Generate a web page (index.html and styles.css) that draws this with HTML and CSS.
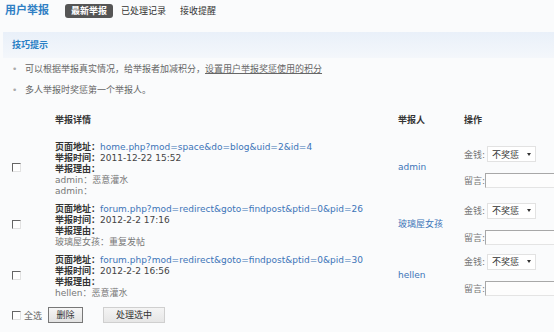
FILE: index.html
```html
<!DOCTYPE html>
<html lang="zh-CN">
<head>
<meta charset="utf-8">
<title>用户举报</title>
<link rel="stylesheet" href="styles.css">
</head>
<body>
<div class="page">
  <div class="topbar">
    <h1 class="title">用户举报</h1>
    <nav class="tabs">
      <a class="tab active">最新举报</a>
      <a class="tab">已处理记录</a>
      <a class="tab">接收提醒</a>
    </nav>
  </div>

  <div class="tipbar">技巧提示</div>
  <ul class="tips">
    <li>可以根据举报真实情况，给举报者加减积分，<a class="tiplink">设置用户举报奖惩使用的积分</a></li>
    <li>多人举报时奖惩第一个举报人。</li>
  </ul>

  <table class="reports">
    <colgroup>
      <col class="col-check">
      <col class="col-detail">
      <col class="col-user">
      <col class="col-op">
    </colgroup>
    <thead>
      <tr><th></th><th>举报详情</th><th>举报人</th><th>操作</th></tr>
    </thead>
    <tbody>
      <tr>
        <td class="c-check"><span class="cb"></span></td>
        <td>
          <div class="detail">
            <div><b>页面地址：</b><a class="link">home.php?mod=space&amp;do=blog&amp;uid=2&amp;id=4</a></div>
            <div><b>举报时间：</b><span class="val">2011-12-22 15:52</span></div>
            <div><b>举报理由：</b></div>
            <div class="reason">admin：恶意灌水</div>
            <div class="reason">admin：</div>
          </div>
        </td>
        <td><a class="link">admin</a></td>
        <td>
          <div class="op">
            <div class="op-line"><span class="op-label">金钱:</span><span class="sel">不奖惩<i class="arrow"></i></span></div>
            <div class="op-line"><span class="op-label">留言:</span><span class="inp"></span></div>
          </div>
        </td>
      </tr>
      <tr>
        <td class="c-check"><span class="cb"></span></td>
        <td>
          <div class="detail">
            <div><b>页面地址：</b><a class="link">forum.php?mod=redirect&amp;goto=findpost&amp;ptid=0&amp;pid=26</a></div>
            <div><b>举报时间：</b><span class="val">2012-2-2 17:16</span></div>
            <div><b>举报理由：</b></div>
            <div class="reason">玻璃屋女孩：重复发帖</div>
          </div>
        </td>
        <td><a class="link">玻璃屋女孩</a></td>
        <td>
          <div class="op">
            <div class="op-line"><span class="op-label">金钱:</span><span class="sel">不奖惩<i class="arrow"></i></span></div>
            <div class="op-line"><span class="op-label">留言:</span><span class="inp"></span></div>
          </div>
        </td>
      </tr>
      <tr>
        <td class="c-check"><span class="cb"></span></td>
        <td>
          <div class="detail">
            <div><b>页面地址：</b><a class="link">forum.php?mod=redirect&amp;goto=findpost&amp;ptid=0&amp;pid=30</a></div>
            <div><b>举报时间：</b><span class="val">2012-2-2 16:56</span></div>
            <div><b>举报理由：</b></div>
            <div class="reason">hellen：恶意灌水</div>
          </div>
        </td>
        <td><a class="link">hellen</a></td>
        <td>
          <div class="op">
            <div class="op-line"><span class="op-label">金钱:</span><span class="sel">不奖惩<i class="arrow"></i></span></div>
            <div class="op-line"><span class="op-label">留言:</span><span class="inp"></span></div>
          </div>
        </td>
      </tr>
    </tbody>
  </table>

  <div class="footer">
    <span class="cb"></span>
    <span class="all">全选</span>
    <button class="btn btn-del">删除</button>
    <button class="btn btn-do">处理选中</button>
  </div>
</div>
</body>
</html>
```

FILE: styles.css
```css
html, body {
  margin: 0;
  padding: 0;
  overflow: hidden;
  background: #fafbfc;
}

body {
  font-family: "DejaVu Sans", "Noto Sans CJK SC", sans-serif;
  font-size: 9px;
  color: #333;
}

.page {
  width: 554px;
}

/* top bar */
.topbar {
  display: flex;
  align-items: center;
  height: 15px;
  padding: 3px 0 0 5px;
}

.title {
  margin: 0;
  font-size: 11px;
  font-weight: bold;
  color: #2f7fc4;
  line-height: 15px;
}

.tabs {
  display: flex;
  gap: 2px;
  margin-left: 16px;
}

.tab {
  display: block;
  padding: 0 6px;
  line-height: 14px;
  height: 14px;
  color: #333;
  border-radius: 3px;
}

.tab.active {
  background: #555;
  color: #fff;
  font-weight: bold;
}

/* tip bar */
.tipbar {
  margin: 14px 0 0 3px;
  height: 26px;
  line-height: 26px;
  padding-left: 9px;
  font-weight: bold;
  color: #2a80c5;
  background: linear-gradient(#e9f0f9, #f4f7fb);
}

.tips {
  list-style: none;
  margin: 1px 0 0;
  padding: 0 0 0 25px;
  color: #666;
}

.tips li {
  line-height: 21px;
}

.tips li::before {
  content: "•";
  display: inline-block;
  width: 13px;
  margin-left: -13px;
  color: #aaa;
}

.tiplink {
  color: #666;
  text-decoration: underline;
}

/* table */
.reports {
  margin-top: 10px;
  width: 554px;
  table-layout: fixed;
  border-collapse: collapse;
  border-spacing: 0;
}

.col-check { width: 55px; }
.col-detail { width: 343px; }
.col-user { width: 66px; }
.col-op { width: 90px; }

.reports th {
  text-align: left;
  font-weight: bold;
  color: #333;
  line-height: 11px;
  padding: 4px 0 10px;
}

.reports td {
  padding: 0;
  vertical-align: middle;
  white-space: nowrap;
}

.c-check {
  padding-left: 12px !important;
}

.detail {
  padding: 6px 0 1px;
  line-height: 11px;
}

.detail b {
  color: #333;
  font-weight: bold;
}

.val {
  color: #444;
}

.reason {
  color: #777;
}

.link {
  color: #3c74b8;
  text-decoration: none;
}

/* checkbox */
.cb {
  display: inline-block;
  box-sizing: border-box;
  width: 9px;
  height: 9px;
  border: 1px solid;
  border-color: #666 #e2e2e2 #e2e2e2 #666;
  background: #fff;
  vertical-align: middle;
}

/* operations */
.op {
  display: flex;
  flex-direction: column;
  gap: 11px;
}

.op-line {
  display: flex;
  align-items: center;
}

.op-label {
  width: 23px;
  color: #777;
}

.sel {
  box-sizing: border-box;
  display: flex;
  align-items: center;
  width: 49px;
  height: 16px;
  padding-left: 4px;
  border: 1px solid #e2e2e2;
  background: #fff;
  color: #333;
}

.arrow {
  margin-left: auto;
  margin-right: 4px;
  width: 0;
  height: 0;
  border-left: 2px solid transparent;
  border-right: 2px solid transparent;
  border-top: 3px solid #333;
}

.inp {
  box-sizing: border-box;
  display: block;
  flex: none;
  width: 80px;
  height: 15px;
  border: 1px solid;
  border-color: #a8a8a8 #e4e4e4 #e4e4e4 #a8a8a8;
  background: #fdfdfd;
}

/* footer */
.footer {
  display: flex;
  align-items: center;
  margin-top: 7px;
  padding-left: 12px;
}

.all {
  margin-left: 3px;
  color: #666;
}

.btn {
  box-sizing: border-box;
  height: 16px;
  padding: 0;
  font-family: inherit;
  font-size: 9px;
  color: #333;
  line-height: 14px;
  cursor: pointer;
}

.btn-del {
  width: 35px;
  margin-left: 6px;
  border: 1px solid #777;
  background: linear-gradient(#f6f6f6, #e2e2e2);
}

.btn-do {
  width: 62px;
  margin-left: 20px;
  border: 1px solid #cfcfcf;
  background: linear-gradient(#f4f4f4, #e6e6e6);
}
```
